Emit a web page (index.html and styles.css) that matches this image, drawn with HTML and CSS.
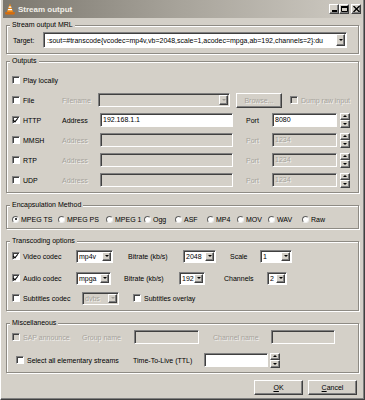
FILE: index.html
```html
<!DOCTYPE html>
<html lang="en">
<head>
    <meta charset="UTF-8">
    <title>Stream output</title>
    <link rel="stylesheet" href="styles.css">
</head>
<body>
<div class="window">
    <!-- title bar -->
    <div class="titlebar">
        <svg class="app-icon" width="12" height="12" viewBox="0 0 12 12">
            <path d="M6 0.5 L9.2 9.3 H2.8 Z" fill="#f28a12"/>
            <path d="M4.9 3.6 H7.1 L7.5 4.8 H4.5 Z" fill="#fff"/>
            <path d="M4.1 6.1 H7.9 L8.3 7.3 H3.7 Z" fill="#fff"/>
            <path d="M1 9.2 H11 L10.4 11.5 H1.6 Z" fill="#d96c08"/>
        </svg>
        <span class="title">Stream output</span>
        <div class="caption-buttons">
            <span class="cap-btn"><svg width="7" height="6" viewBox="0 0 7 6"><rect x="1" y="4" width="5" height="2" fill="#000"/></svg></span>
            <span class="cap-btn"><svg width="7" height="6" viewBox="0 0 7 6"><path d="M0.5 0.5 H6.5 V5.5 H0.5 Z" fill="none" stroke="#000"/><rect x="0" y="0" width="7" height="2" fill="#000"/></svg></span>
            <span class="cap-btn cap-close"><svg width="7" height="6" viewBox="0 0 7 6"><path d="M0.5 0 L6.5 6 M6.5 0 L0.5 6" stroke="#000" stroke-width="1.4"/></svg></span>
        </div>
    </div>

    <div class="content">
        <!-- MRL -->
        <fieldset class="group group-mrl">
            <legend>Stream output MRL</legend>
            <div class="mrl-row">
                <span class="mrl-label">Target:</span>
                <div class="combo combo-mrl">
                    <span class="val">:sout=#transcode{vcodec=mp4v,vb=2048,scale=1,acodec=mpga,ab=192,channels=2}:du</span>
                    <span class="drop"><i class="arrow"></i></span>
                </div>
            </div>
        </fieldset>

        <!-- Outputs -->
        <fieldset class="group group-outputs">
            <legend>Outputs</legend>
            <div class="outputs-grid">
                <label class="chk span-all"><span class="check"></span>Play locally</label>

                <label class="chk"><span class="check"></span>File</label>
                <span class="lbl dis">Filename</span>
                <div class="combo dis combo-file"><span class="val"></span><span class="drop"><i class="arrow"></i></span></div>
                <div class="file-extra">
                    <span class="btn btn-browse dis">Browse...</span>
                    <label class="chk chk-dump dis"><span class="check dis"></span>Dump raw input</label>
                </div>

                <label class="chk"><span class="check on"></span>HTTP</label>
                <span class="lbl">Address</span>
                <div class="field">192.168.1.1</div>
                <span class="lbl port-label">Port</span>
                <div class="field">8080</div>
                <div class="spin"><span class="spin-btn"><i class="up"></i></span><span class="spin-btn"><i class="down"></i></span></div>

                <label class="chk"><span class="check"></span>MMSH</label>
                <span class="lbl dis">Address</span>
                <div class="field dis"></div>
                <span class="lbl port-label dis">Port</span>
                <div class="field dis">1234</div>
                <div class="spin"><span class="spin-btn"><i class="up"></i></span><span class="spin-btn"><i class="down"></i></span></div>

                <label class="chk"><span class="check"></span>RTP</label>
                <span class="lbl dis">Address</span>
                <div class="field dis"></div>
                <span class="lbl port-label dis">Port</span>
                <div class="field dis">1234</div>
                <div class="spin"><span class="spin-btn"><i class="up"></i></span><span class="spin-btn"><i class="down"></i></span></div>

                <label class="chk"><span class="check"></span>UDP</label>
                <span class="lbl dis">Address</span>
                <div class="field dis"></div>
                <span class="lbl port-label dis">Port</span>
                <div class="field dis">1234</div>
                <div class="spin"><span class="spin-btn"><i class="up"></i></span><span class="spin-btn"><i class="down"></i></span></div>
            </div>
        </fieldset>

        <!-- Encapsulation -->
        <fieldset class="group group-encap">
            <legend>Encapsulation Method</legend>
            <div class="encap-grid">
                <label class="opt"><span class="radio on"></span>MPEG TS</label>
                <label class="opt"><span class="radio"></span>MPEG PS</label>
                <label class="opt"><span class="radio"></span>MPEG 1</label>
                <label class="opt"><span class="radio"></span>Ogg</label>
                <label class="opt"><span class="radio"></span>ASF</label>
                <label class="opt"><span class="radio"></span>MP4</label>
                <label class="opt"><span class="radio"></span>MOV</label>
                <label class="opt"><span class="radio"></span>WAV</label>
                <label class="opt"><span class="radio"></span>Raw</label>
            </div>
        </fieldset>

        <!-- Transcoding -->
        <fieldset class="group group-transcode">
            <legend>Transcoding options</legend>
            <div class="row tc-row">
                <label class="chk w-codec"><span class="check on"></span>Video codec</label>
                <div class="combo c-vcodec"><span class="val">mp4v</span><span class="drop"><i class="arrow"></i></span></div>
                <span class="lbl l-vbitrate">Bitrate (kb/s)</span>
                <div class="combo c-vb"><span class="val">2048</span><span class="drop"><i class="arrow"></i></span></div>
                <span class="lbl l-scale">Scale</span>
                <div class="combo c-scale"><span class="val">1</span><span class="drop"><i class="arrow"></i></span></div>
            </div>
            <div class="row tc-row tc-audio">
                <label class="chk w-codec"><span class="check on"></span>Audio codec</label>
                <div class="combo c-acodec"><span class="val">mpga</span><span class="drop"><i class="arrow"></i></span></div>
                <span class="lbl l-abitrate">Bitrate (kb/s)</span>
                <div class="combo c-ab"><span class="val">192</span><span class="drop"><i class="arrow"></i></span></div>
                <span class="lbl l-channels">Channels</span>
                <div class="combo c-channels"><span class="val">2</span><span class="drop"><i class="arrow"></i></span></div>
            </div>
            <div class="row tc-row">
                <label class="chk w-subs"><span class="check"></span>Subtitles codec</label>
                <div class="combo dis c-subs"><span class="val">dvbs</span><span class="drop"><i class="arrow"></i></span></div>
                <label class="chk chk-overlay"><span class="check"></span>Subtitles overlay</label>
            </div>
        </fieldset>

        <!-- Misc -->
        <fieldset class="group group-misc">
            <legend>Miscellaneous</legend>
            <div class="row misc-sap">
                <label class="chk dis w-subs"><span class="check dis"></span>SAP announce</label>
                <span class="lbl dis l-group">Group name</span>
                <div class="field dis f-group"></div>
                <span class="lbl dis l-channel">Channel name</span>
                <div class="field dis f-channel"></div>
            </div>
            <div class="row misc-ttl">
                <label class="chk chk-all"><span class="check"></span>Select all elementary streams</label>
                <span class="lbl l-ttl">Time-To-Live (TTL)</span>
                <div class="field f-ttl"></div>
                <div class="spin spin-ttl"><span class="spin-btn"><i class="up"></i></span><span class="spin-btn"><i class="down"></i></span></div>
            </div>
        </fieldset>

        <div class="buttons">
            <span class="btn btn-dialog"><u>O</u>K</span>
            <span class="btn btn-dialog"><u>C</u>ancel</span>
        </div>
    </div>
</div>
</body>
</html>
```

FILE: styles.css
```css
body {
    margin: 0;
    font-family: "Liberation Sans", Arial, sans-serif;
    font-size: 7px;
    color: #000;
    background: #d4d0c8;
}
.window {
    width: 365px;
    height: 400px;
    box-sizing: border-box;
    background: #d4d0c8;
    border: 1px solid;
    border-top: 0;
    border-color: #fff #404040 #404040 #fff;
    box-shadow: inset -1px -1px #808080;
    padding: 0 2px 2px;
}
.titlebar {
    height: 18px;
    display: flex;
    align-items: center;
    background: linear-gradient(90deg, #7b776e, #a8a49b 50%, #cfcbc3);
    padding-right: 1px;
}
.app-icon {
    margin-left: 1px;
}
.title {
    margin-left: 2px;
    color: #f1eee8;
    font-weight: bold;
    font-size: 8px;
}
.caption-buttons {
    margin-left: auto;
    display: flex;
}
.cap-btn {
    width: 10px;
    height: 10px;
    box-sizing: border-box;
    background: #d4d0c8;
    border: 1px solid;
    border-color: #fff #404040 #404040 #fff;
    box-shadow: inset -1px -1px #808080;
    display: flex;
    align-items: center;
    justify-content: center;
}
.cap-close {
    margin-left: 2px;
}
.content {
    padding: 0 3px;
}

/* group boxes */
.group {
    margin: 7px 0 0;
    padding: 0 4px 2px 5px;
    border: 1px solid #8e8b84;
    box-shadow: inset 1px 1px #fff, 1px 1px #fff;
    min-width: 0;
}
.group legend {
    padding: 0 2px;
    margin-left: -2px;
    line-height: 10px;
    height: 10px;
    background: #d4d0c8;
}
.group-mrl {
    margin-top: 2px;
    padding-top: 2px;
    padding-bottom: 5px;
}
.group-outputs {
    margin-top: 2px;
    padding-top: 4px;
}
.group-encap {
    padding-top: 2px;
}
.group-misc {
    padding-bottom: 2px;
}

.mrl-row {
    display: flex;
    align-items: center;
}
.mrl-label {
    width: 31px;
    padding-left: 1px;
    box-sizing: border-box;
}

/* controls */
.lbl {
    white-space: nowrap;
}
.dis {
    color: #a6a39c;
    text-shadow: 1px 1px rgba(255, 255, 255, 0.7);
}
.chk {
    display: flex;
    align-items: center;
    gap: 3px;
    white-space: nowrap;
}
.check {
    width: 8px;
    height: 8px;
    box-sizing: border-box;
    flex: none;
    position: relative;
    background: #fff;
    border: 1px solid;
    border-color: #808080 #fff #fff #808080;
    box-shadow: inset 1px 1px #404040;
}
.check.dis {
    background: #d4d0c8;
}
.check.on::after {
    content: "";
    position: absolute;
    left: 1px;
    top: 0;
    width: 2px;
    height: 4px;
    border: solid #000;
    border-width: 0 1.5px 1.5px 0;
    transform: rotate(40deg);
}
.radio {
    width: 7px;
    height: 7px;
    box-sizing: border-box;
    flex: none;
    border-radius: 50%;
    background: #fff;
    border: 1px solid;
    border-color: #606060 #eee #eee #606060;
    position: relative;
}
.radio.on::after {
    content: "";
    position: absolute;
    left: 1.5px;
    top: 1.5px;
    width: 2px;
    height: 2px;
    border-radius: 50%;
    background: #000;
}
.field,
.combo {
    height: 14px;
    box-sizing: border-box;
    background: #fff;
    border: 1px solid;
    border-color: #808080 #fff #fff #808080;
    box-shadow: inset 1px 1px #404040;
    line-height: 12px;
    white-space: nowrap;
    overflow: hidden;
}
.field {
    padding-left: 2px;
}
.field.dis,
.combo.dis {
    background: #d4d0c8;
}
.combo {
    display: flex;
}
.combo .val {
    flex: 1;
    overflow: hidden;
    padding-left: 2px;
    padding-top: 1px;
}
.drop,
.spin-btn {
    background: #d4d0c8;
    box-sizing: border-box;
    border: 1px solid;
    border-color: #fff #404040 #404040 #fff;
    box-shadow: inset -1px -1px #808080;
    display: flex;
    align-items: center;
    justify-content: center;
}
.drop {
    width: 9px;
    flex: none;
    margin: 1px 1px 1px 0;
}
.arrow,
.down {
    width: 0;
    height: 0;
    border-left: 2px solid transparent;
    border-right: 2px solid transparent;
    border-top: 2px solid #000;
}
.up {
    width: 0;
    height: 0;
    border-left: 2px solid transparent;
    border-right: 2px solid transparent;
    border-bottom: 2px solid #000;
}
.combo.dis .arrow {
    border-top-color: #a19e97;
}
.spin {
    display: flex;
    flex-direction: column;
    width: 10px;
    height: 15px;
}
.spin-btn {
    flex: 1;
}
.btn {
    height: 15px;
    box-sizing: border-box;
    background: #d4d0c8;
    border: 1px solid;
    border-color: #fff #404040 #404040 #fff;
    box-shadow: inset -1px -1px #808080;
    display: flex;
    align-items: center;
    justify-content: center;
}

/* outputs */
.outputs-grid {
    display: grid;
    grid-template-columns: 50px 38px 133px 13px 26px 65px 3px 10px;
    grid-auto-rows: 20px;
    align-items: center;
}
.span-all {
    grid-column: 1 / -1;
}
.combo-mrl {
    width: 304px;
    height: 16px;
}
.combo-mrl .val {
    padding-top: 2px;
    padding-left: 3px;
}
.combo-file {
    margin-left: -2px;
    width: 132px;
}
.file-extra {
    grid-column: 4 / -1;
    display: flex;
    align-items: center;
}
.btn-browse {
    margin-left: 3px;
    width: 47px;
}
.chk-dump {
    margin-left: 8px;
}
.port-label {
    grid-column: 5;
}
.outputs-grid .spin {
    grid-column: 8;
}

/* encapsulation */
.encap-grid {
    display: grid;
    grid-template-columns: 46px 48px 38px 31px 32px 30px 31px 34px auto;
    height: 14px;
    align-items: center;
}
.opt {
    display: flex;
    align-items: center;
    gap: 2px;
    white-space: nowrap;
}

/* transcoding + misc rows */
.row {
    display: flex;
    align-items: center;
    height: 20px;
}
.tc-audio {
    margin-top: 2px;
}
.group-transcode .combo {
    height: 13px;
}
.group-transcode .combo .val {
    padding-top: 0;
}
.w-codec { width: 64px; }
.w-subs { width: 70px; }
.c-vcodec { width: 37px; }
.c-acodec { width: 35px; }
.c-subs { width: 37px; }
.l-vbitrate { margin-left: 15px; width: 55px; }
.l-abitrate { margin-left: 13px; width: 55px; }
.c-vb { width: 33px; }
.c-ab { width: 26px; }
.l-scale { margin-left: 14px; width: 30px; }
.c-scale { width: 32px; }
.l-channels { margin-left: 19px; width: 43px; }
.c-channels { width: 20px; }
.chk-overlay { margin-left: 14px; }

.misc-sap {
    height: 18px;
}
.misc-ttl {
    margin-top: 4px;
}
.l-group { width: 52px; }
.f-group { width: 65px; }
.l-channel { margin-left: 14px; width: 58px; }
.f-channel { width: 64px; }
.chk-all {
    width: 121px;
    padding-left: 4px;
    box-sizing: border-box;
}
.l-ttl { width: 71px; }
.f-ttl { width: 64px; }
.spin-ttl { margin-left: 2px; }

.buttons {
    display: flex;
    justify-content: flex-end;
    gap: 5px;
    margin-top: 7px;
    padding-right: 2px;
}
.btn-dialog {
    width: 49px;
}
```
